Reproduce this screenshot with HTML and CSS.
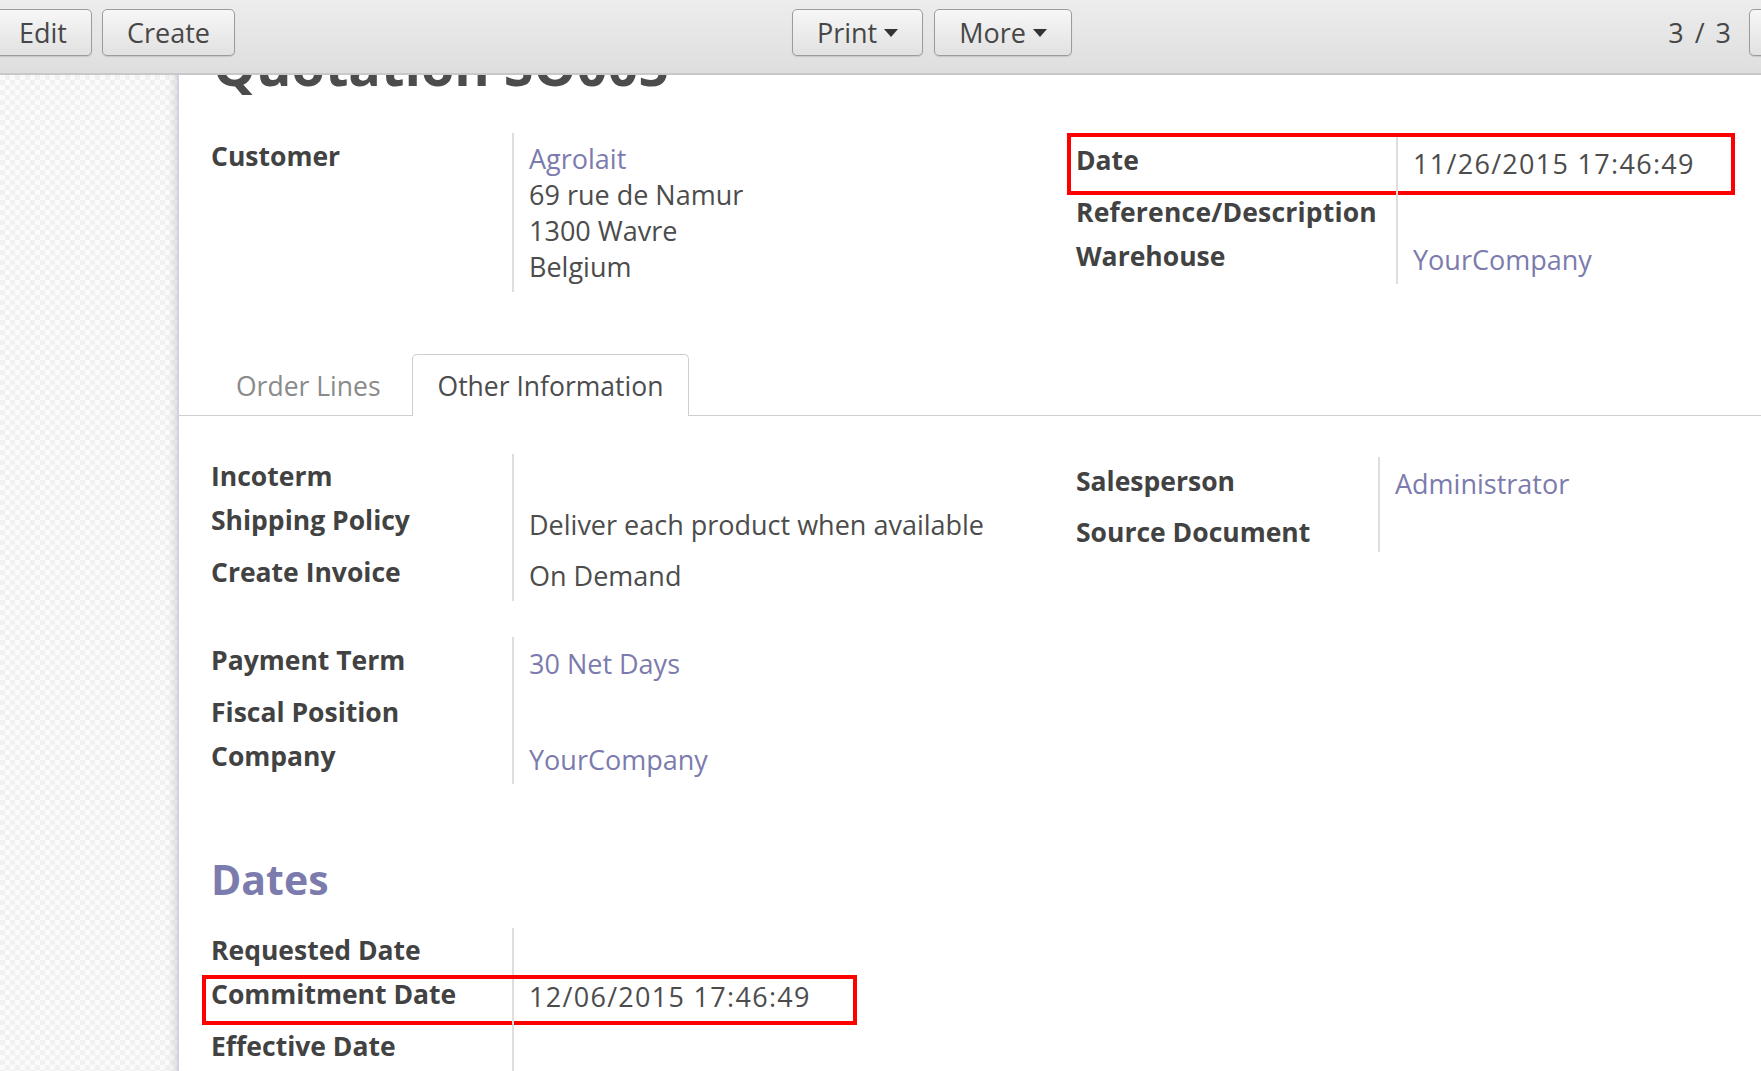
FILE: index.html
```html
<!DOCTYPE html>
<html lang="en">
<head>
<meta charset="utf-8">
<title>Quotation SO005</title>
<link rel="stylesheet" href="styles.css">
</head>
<body>
<header class="topbar">
  <div class="btn-group left-group">
    <button class="btn">Edit</button>
    <button class="btn">Create</button>
  </div>
  <div class="btn-group mid-group">
    <button class="btn">Print <span class="caret"></span></button>
    <button class="btn">More <span class="caret"></span></button>
  </div>
  <div class="pager">
    <span class="pager-value">3 / 3</span>
    <button class="btn btn-cut"></button>
  </div>
</header>
<div class="main">
  <aside class="sidebar"></aside>
  <section class="sheet">
    <h1 class="title">Quotation SO005</h1>

    <div class="group-row first-row">
      <div class="group">
        <div class="field h159">
          <div class="lbl pt8">Customer</div>
          <div class="val val-address pt8">
            <div class="link">Agrolait</div>
            <div>69 rue de Namur</div>
            <div>1300 Wavre</div>
            <div>Belgium</div>
          </div>
        </div>
      </div>
      <div class="group group-right wide">
        <div class="field h53">
          <div class="lbl pt10">Date</div>
          <div class="val date pt14">11/26/2015 17:46:49</div>
          <div class="mark mark-date"></div>
        </div>
        <div class="field h46">
          <div class="lbl lbl-ref pt9">Reference/Description</div>
          <div class="val"></div>
        </div>
        <div class="field h50">
          <div class="lbl pt7">Warehouse</div>
          <div class="val pt11 link">YourCompany</div>
        </div>
      </div>
    </div>

    <ul class="tabs">
      <li class="tab">Order Lines</li>
      <li class="tab active">Other Information</li>
    </ul>

    <div class="group-row tab-row">
      <div class="group">
        <div class="field h42">
          <div class="lbl pt7">Incoterm</div>
          <div class="val"></div>
        </div>
        <div class="field h50">
          <div class="lbl pt9">Shipping Policy</div>
          <div class="val pt14">Deliver each product when available</div>
        </div>
        <div class="field h55">
          <div class="lbl pt11">Create Invoice</div>
          <div class="val pt15">On Demand</div>
        </div>
      </div>
      <div class="group group-right3">
        <div class="field h48">
          <div class="lbl pt9">Salesperson</div>
          <div class="val pt12 link">Administrator</div>
        </div>
        <div class="field h47">
          <div class="lbl pt12">Source Document</div>
          <div class="val"></div>
        </div>
      </div>
    </div>

    <div class="group-row payment-row">
      <div class="group">
        <div class="field h49">
          <div class="lbl pt8">Payment Term</div>
          <div class="val pt12 link">30 Net Days</div>
        </div>
        <div class="field h48">
          <div class="lbl pt11">Fiscal Position</div>
          <div class="val"></div>
        </div>
        <div class="field h50">
          <div class="lbl pt7">Company</div>
          <div class="val pt11 link">YourCompany</div>
        </div>
      </div>
    </div>

    <h2 class="section-title">Dates</h2>

    <div class="group-row dates-row">
      <div class="group">
        <div class="field h44">
          <div class="lbl pt7">Requested Date</div>
          <div class="val"></div>
        </div>
        <div class="field h48">
          <div class="lbl pt7">Commitment Date</div>
          <div class="val date pt10">12/06/2015 17:46:49</div>
          <div class="mark mark-commit"></div>
        </div>
        <div class="field h60">
          <div class="lbl pt11">Effective Date</div>
          <div class="val"></div>
        </div>
      </div>
    </div>
  </section>
</div>
</body>
</html>
```

FILE: styles.css
```css
* { box-sizing: border-box; }

html, body {
  margin: 0;
  padding: 0;
}

body {
  width: 1761px;
  height: 1071px;
  overflow: hidden;
  display: flex;
  flex-direction: column;
  font-family: "Open Sans", "DejaVu Sans", sans-serif;
  color: #4c4c4c;
  background: #fff;
}

/* ---------- top bar ---------- */
.topbar {
  flex: none;
  height: 75px;
  display: flex;
  align-items: flex-start;
  padding-top: 9px;
  background: linear-gradient(#ededed, #dedede);
  border-bottom: 2px solid #c8c8c8;
}

.btn-group {
  display: flex;
}

.left-group {
  margin-left: -6px;
  gap: 10px;
}

.mid-group {
  margin-left: 557px;
  gap: 11px;
}

.btn {
  height: 47px;
  padding: 0 24px;
  display: flex;
  align-items: center;
  gap: 7px;
  font-family: inherit;
  font-size: 27px;
  color: #474747;
  border: 1px solid #9c9c9c;
  border-radius: 5px;
  background: linear-gradient(#f7f7f7, #e1e1e1);
  box-shadow: 0 1px 1px rgba(0, 0, 0, 0.12);
}

.caret {
  width: 0;
  height: 0;
  border-left: 7px solid transparent;
  border-right: 7px solid transparent;
  border-top: 8px solid #333;
}

.pager {
  margin-left: auto;
  margin-right: -30px;
  display: flex;
  align-items: center;
  height: 47px;
}

.pager-value {
  font-size: 27px;
  word-spacing: 4px;
  color: #474747;
}

.btn-cut {
  margin-left: 18px;
  width: 42px;
  padding: 0;
}

/* ---------- main area ---------- */
.main {
  flex: 1;
  min-height: 0;
  display: flex;
  overflow: hidden;
}

.sidebar {
  flex: none;
  width: 179px;
  border-right: 2px solid #d2d2e2;
  background: repeating-conic-gradient(#f1f1f1 0% 25%, #fbfbfb 0% 50%) 0 0 / 10px 10px;
  box-shadow: inset -8px 0 10px -6px rgba(0, 0, 0, 0.14);
}

.sheet {
  flex: 1;
  overflow: hidden;
  background: #fff;
}

.title {
  margin: -37px 0 0;
  padding-left: 34px;
  font-size: 54px;
  line-height: 54px;
  font-weight: 700;
  color: #4c4c4c;
}

/* ---------- field groups ---------- */
.group-row {
  display: grid;
  grid-template-columns: 865px 1fr;
  padding-left: 32px;
}

.first-row { margin-top: 41px; }
.tab-row { margin-top: 38px; }
.payment-row { margin-top: 36px; }
.dates-row { margin-top: 24px; }

.group-right { margin-top: 2px; }
.group-right3 { margin-top: 3px; }

.field {
  position: relative;
  display: grid;
  grid-template-columns: 301px 1fr;
}

.group-right .field { grid-template-columns: 320px 1fr; }
.group-right3 .field { grid-template-columns: 302px 1fr; }

.lbl {
  font-weight: 700;
  font-size: 26.5px;
  line-height: 30px;
  color: #424242;
  white-space: nowrap;
}

.lbl-ref { letter-spacing: 0.2px; }

.val {
  border-left: 2px solid #dedede;
  padding-left: 15px;
  font-size: 27px;
  line-height: 30px;
  color: #4c4c4c;
  white-space: nowrap;
}

.val.date { letter-spacing: 1.3px; }

.val-address {
  line-height: 36px;
}

.link { color: #7c7bad; }

/* row heights */
.h42 { height: 42px; }
.h44 { height: 44px; }
.h46 { height: 46px; }
.h47 { height: 47px; }
.h48 { height: 48px; }
.h49 { height: 49px; }
.h50 { height: 50px; }
.h53 { height: 53px; }
.h55 { height: 55px; }
.h60 { height: 60px; }
.h159 { height: 159px; }

/* cell offsets */
.pt7 { padding-top: 7px; }
.pt8 { padding-top: 8px; }
.pt9 { padding-top: 9px; }
.pt10 { padding-top: 10px; }
.pt11 { padding-top: 11px; }
.pt12 { padding-top: 12px; }
.pt14 { padding-top: 14px; }
.pt15 { padding-top: 15px; }

/* ---------- tabs ---------- */
.tabs {
  display: flex;
  list-style: none;
  margin: 62px 0 0;
  padding: 0 0 0 31px;
  border-bottom: 1px solid #cfcfcf;
}

.tab {
  padding: 16px 25px 15px;
  margin-bottom: -1px;
  margin-right: 5px;
  border: 1px solid transparent;
  border-bottom: 0;
  border-radius: 5px 5px 0 0;
  font-size: 26.5px;
  line-height: 30px;
  color: #8a8a8a;
}

.tab.active {
  border-color: #cfcfcf;
  background: #fff;
  color: #4c4c4c;
}

/* ---------- section title ---------- */
.section-title {
  margin: 70px 0 0;
  padding-left: 32px;
  font-size: 41px;
  line-height: 50px;
  font-weight: 700;
  color: #7c7bad;
}

/* ---------- annotation boxes ---------- */
.mark {
  position: absolute;
  border: 4px solid #ff0000;
  pointer-events: none;
}

.mark-date {
  left: -9px;
  top: -2px;
  width: 668px;
  height: 62px;
}

.mark-commit {
  left: -9px;
  top: 3px;
  width: 655px;
  height: 50px;
}
```
